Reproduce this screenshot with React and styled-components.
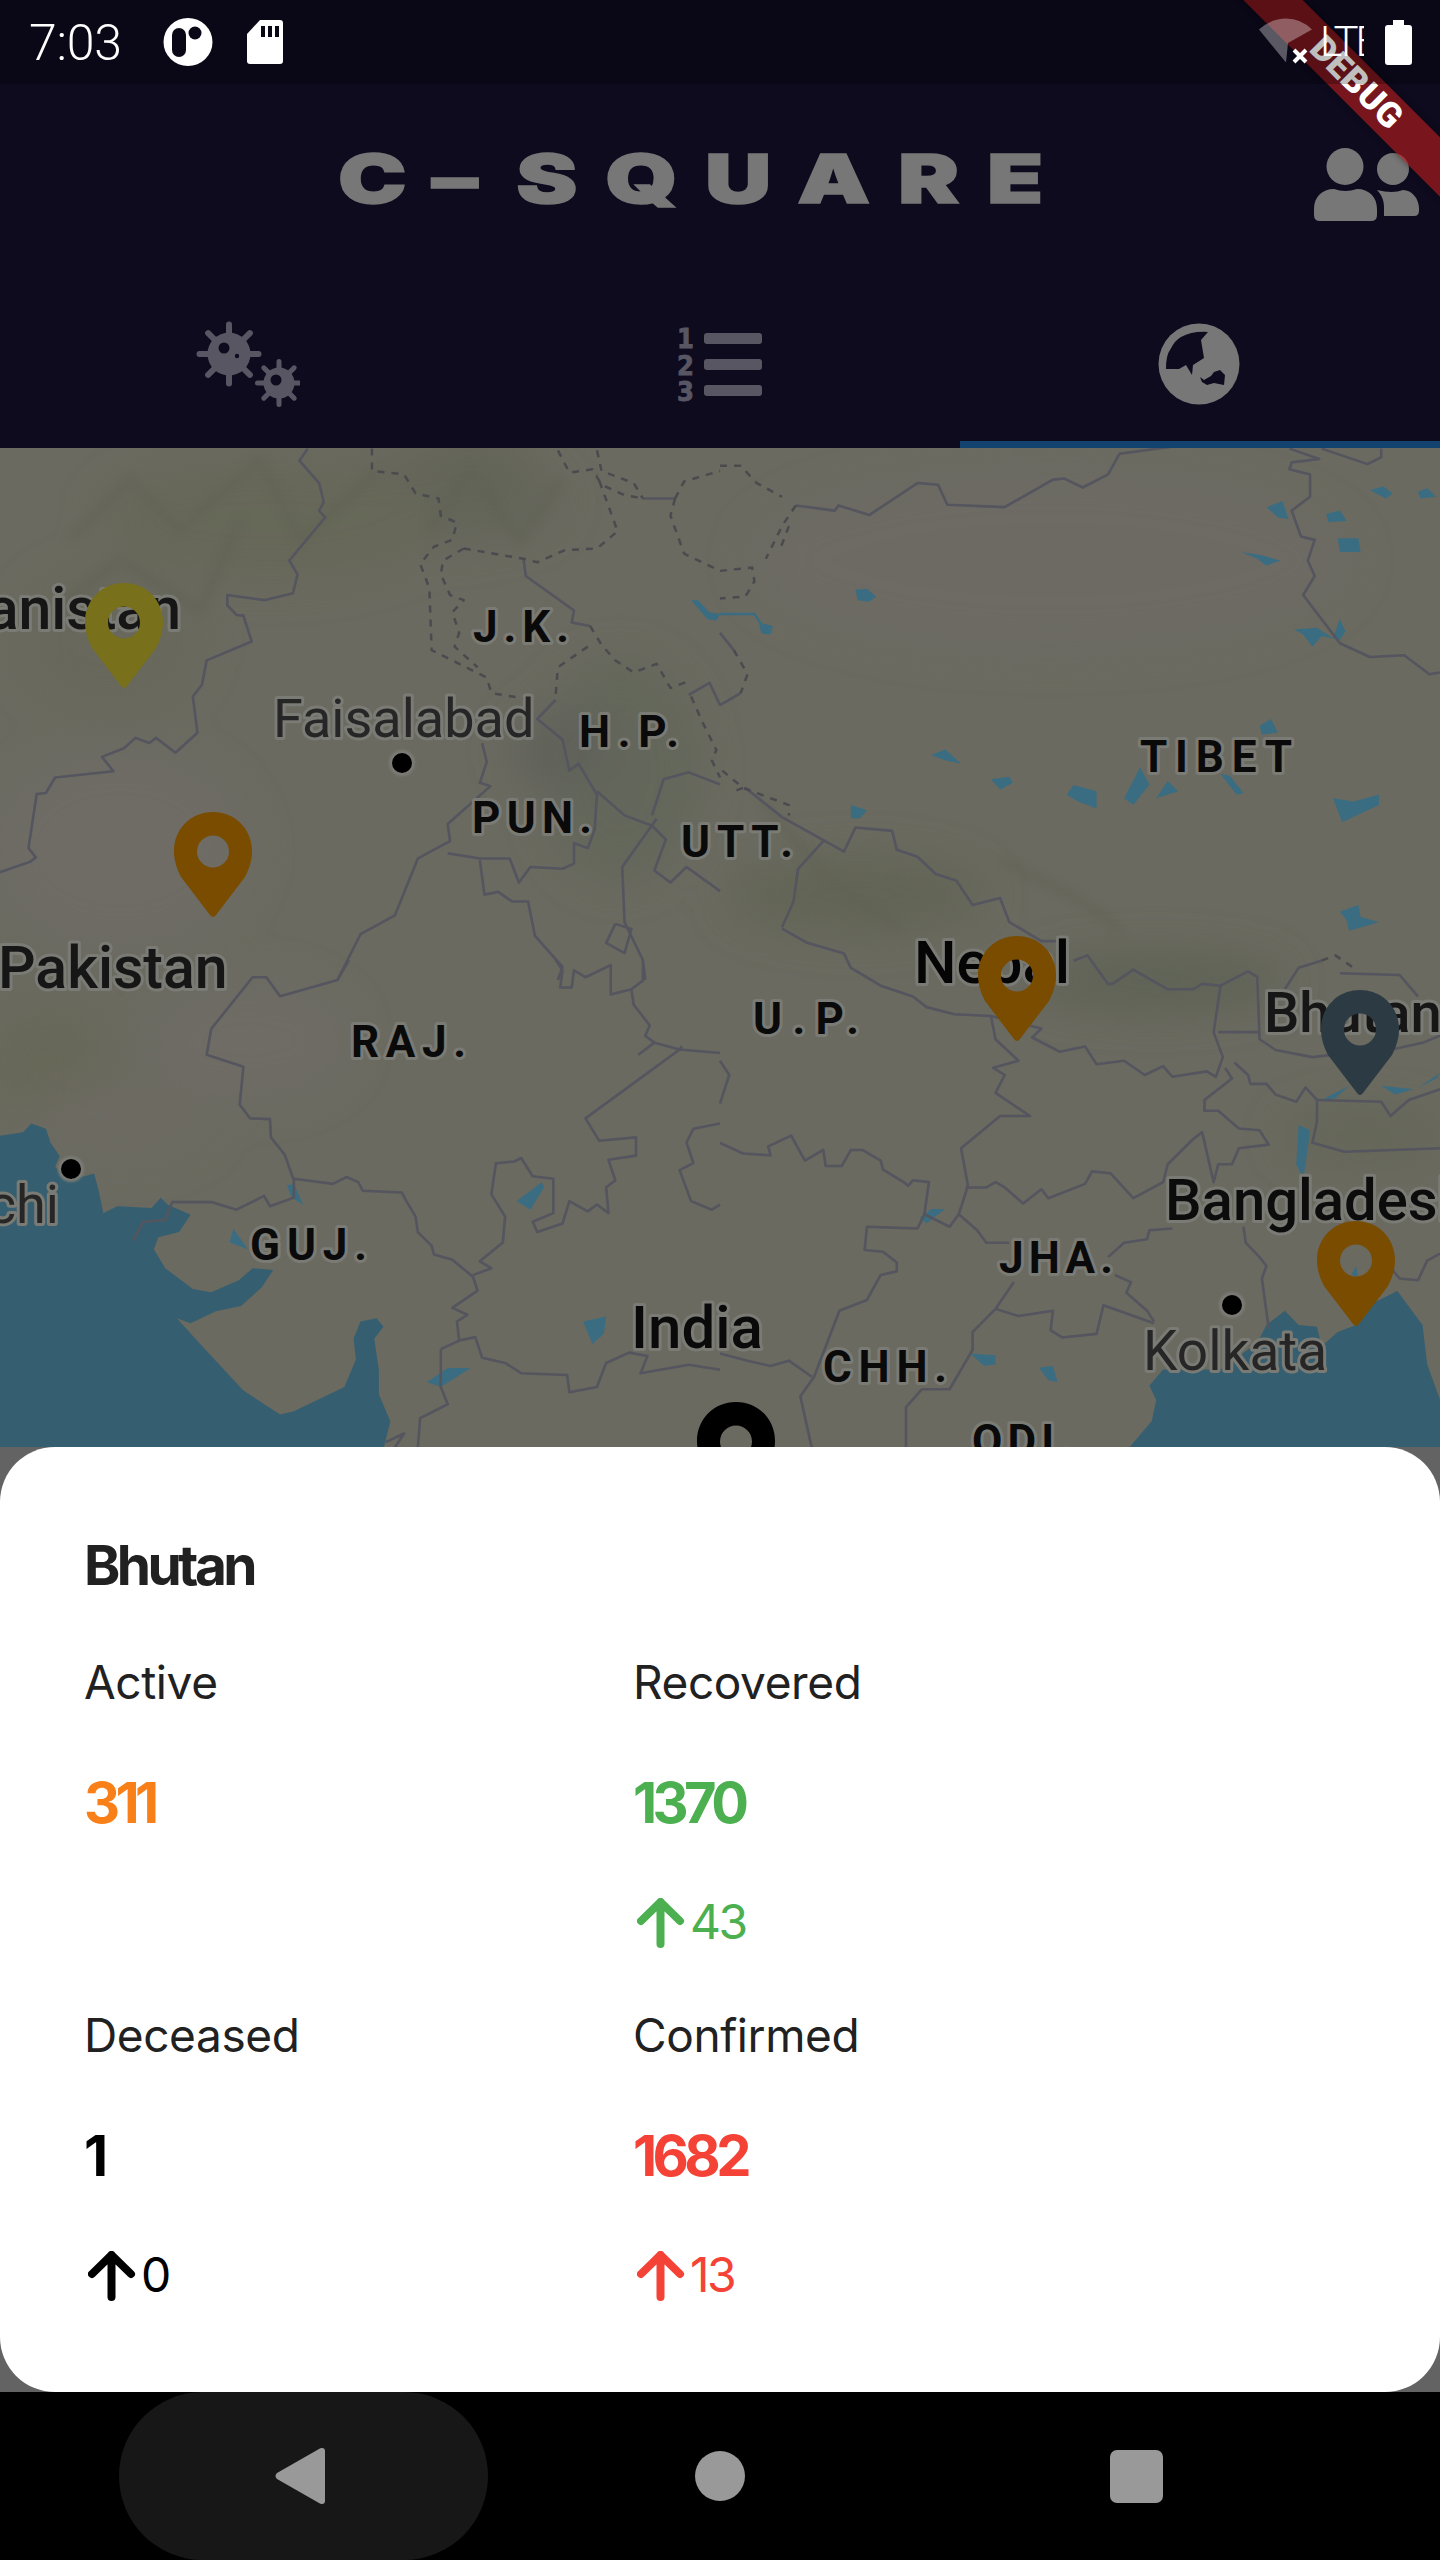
import React from "react";
import styled, { createGlobalStyle } from "styled-components";

const Global = createGlobalStyle`
  html, body { margin: 0; padding: 0; background: #000; }
  * { box-sizing: border-box; }
`;

const App_ = styled.div`
  position: relative;
  width: 1440px;
  height: 2560px;
  overflow: hidden;
  display: flex;
  flex-direction: column;
  background: #636363;
  font-family: Inter, "Liberation Sans", sans-serif;
`;
const Header = styled.header`
  display: flex;
  flex-direction: column;
  height: 448px;
  background: #0e0b1f;
`;
const StatusBar = styled.div`
  position: relative;
  z-index: 3;
  display: flex;
  align-items: center;
  height: 84px;
  padding: 0 28px 0 29px;
  background: rgba(0, 0, 0, 0.25);
  color: #fff;
  font-family: Roboto, sans-serif;
`;
const Clock = styled.span`
  font-size: 50px;
  font-weight: 300;
  line-height: 84px;
  margin: 2px 41px 0 0;
  letter-spacing: -0.2px;
`;
const StatusIcon = styled.svg`
  display: block;
  flex: none;
  margin-left: ${(p) => p.$ml || 0}px;
`;
const StatusRight = styled.div`
  margin-left: auto;
  display: flex;
  align-items: center;
`;
const Lte = styled.span`
  display: block;
  width: 44px;
  overflow: hidden;
  margin-left: 7px;
  margin-right: 21px;
  font-size: 42px;
  font-weight: 300;
  letter-spacing: -3px;
  line-height: 42px;
  white-space: nowrap;
`;
const Banner = styled.div`
  position: absolute;
  z-index: 2;
  left: 1108px;
  top: 64px;
  width: 500px;
  height: 42px;
  padding-right: 5px;
  transform: rotate(45deg);
  background: rgba(183, 28, 28, 0.63);
  box-shadow: 0 0 6px rgba(0, 0, 0, 0.4);
  color: #fff;
  font: 900 35px/42px Roboto, sans-serif;
  text-align: center;
  letter-spacing: 0.5px;
`;
const AppBar = styled.div`
  display: flex;
  align-items: center;
  height: 196px;
  padding: 0 21px 0 338px;
`;
const Title = styled.h1`
  margin: 0 0 8px;
  font: 900 68px/70px Inter, sans-serif;
  letter-spacing: 20.5px;
  color: #777;
  -webkit-text-stroke: 1.5px #777;
  white-space: nowrap;
  transform: scaleX(1.35);
  transform-origin: left center;
`;
const Dash = styled.span`
  display: inline-block;
  margin: 0 4px;
  transform: scaleX(1.45);
`;
const PeopleIcon = styled.svg`
  display: block;
  margin-left: auto;
  margin-top: 6px;
`;
const Tabs = styled.nav`
  display: grid;
  grid-template-columns: repeat(3, 1fr);
  height: 168px;
`;
const Tab = styled.div`
  display: flex;
  align-items: center;
  justify-content: center;
  border-bottom: 7px solid ${(p) => (p.$active ? "#12436f" : "transparent")};
  padding-top: 7px;
`;
const TabIcon = styled.svg`
  display: block;
`;
const MapView = styled.svg`
  display: block;
  flex: none;
  width: 1440px;
  height: 999px;
  polyline { vector-effect: non-scaling-stroke; }
`;
const Border = styled.polyline`
  fill: none;
  stroke: ${(p) => (p.$dash ? "#4b4b4f" : "#54555e")};
  stroke-width: ${(p) => (p.$dash ? 2.5 : 2.6)}px;
  stroke-linejoin: round;
  stroke-dasharray: ${(p) => (p.$dash ? "7 7" : "none")};
`;
const MapLabel = styled.text`
  font-family: Roboto, sans-serif;
  font-size: ${(p) => p.$size}px;
  font-weight: ${(p) => p.$weight};
  fill: ${(p) => p.$fill};
  stroke: #7b7b76;
  stroke-width: 6px;
  stroke-linejoin: round;
  paint-order: stroke;
`;
const Sheet = styled.section`
  background: #fff;
  border-radius: 55px;
  height: 945px;
  padding: 88px 0 0 84px;
  color: #222;
`;
const Country = styled.h2`
  margin: 0 0 57px;
  font: 700 55px/60px Inter, sans-serif;
  letter-spacing: -3.6px;
  color: #212121;
`;
const Stats = styled.div`
  display: grid;
  grid-template-columns: 549px 549px;
  row-gap: 52px;
`;
const Stat = styled.div`
  display: flex;
  flex-direction: column;
`;
const StatLabel = styled.div`
  font: 400 46px/60px Inter, sans-serif;
  letter-spacing: -0.4px;
  color: #212121;
  margin-bottom: 61px;
`;
const StatValue = styled.div`
  font: 700 56px/60px Inter, sans-serif;
  letter-spacing: -4.6px;
  color: ${(p) => p.$color};
  margin-bottom: 60px;
`;
const Delta = styled.div`
  display: flex;
  align-items: center;
  gap: 5px;
  height: 60px;
  font: 400 48px/60px Inter, sans-serif;
  letter-spacing: -2.5px;
  color: ${(p) => p.$color};
`;
const DeltaText = styled.span`
  margin-top: -3px;
`;
const Arrow = styled.svg`
  display: block;
  margin-left: 4px;
  flex: none;
`;
const NavBar = styled.footer`
  display: grid;
  grid-template-columns: repeat(3, 417px);
  justify-items: center;
  align-items: center;
  height: 168px;
  padding: 0 94.5px;
  background: #000;
`;
const BackPill = styled.div`
  display: flex;
  align-items: center;
  justify-content: center;
  width: 369px;
  height: 168px;
  padding-right: 6px;
  border-radius: 84px;
  background: #171717;
`;
const HomeDot = styled.div`
  width: 50px;
  height: 50px;
  border-radius: 50%;
  background: #999;
`;
const RecentSquare = styled.div`
  width: 53px;
  height: 53px;
  margin-right: 2px;
  border-radius: 7px;
  background: #999;
`;

const SEA = "#355f70";
const LAKE = "#3a6d82";

const Z3 = "translate(0 440) scale(.4592 .3444)";
const Z4 = "translate(720 440) scale(.4592 .3444)";
const Z5 = "translate(0 960) scale(.4592 .3444)";
const Z9 = "translate(720 900) scale(.4592 .3571)";

const data = [
  {
    t: Z3,
    solid: [
      "670,25 652,60 695,125 705,180 695,205 708,225 630,350 648,390 638,445 575,465 495,450 495,480 515,508 530,510 548,585 450,640 440,710 420,745 430,850 382,908 340,865 325,880 295,865 270,895 222,920 247,962 120,980 100,1025 80,1028 62,1185 78,1212 65,1225 0,1255",
      "1050,880 1060,935 1045,995 1068,1005 975,1115 980,1165 910,1215 860,1380 785,1435 735,1568",
      "975,1200 1045,1215 1110,1215 1130,1285 1155,1240 1225,1245 1250,1230 1250,1170 1280,1185 1295,1130 1300,1030 1260,940 1240,960 1225,870 1170,810 1210,755",
      "1045,1220 1055,1320 1085,1312 1115,1340 1150,1340 1165,1440 1225,1530 1215,1568",
      "1300,1020 1360,1090 1420,1120 1450,1160 1425,1250 1460,1285 1495,1240 1568,1310",
      "1430,1100 1355,1240 1360,1400 1400,1510 1405,1568",
      "1340,1405 1320,1460 1360,1490 1375,1420 1340,1405",
      "1420,1090 1445,985 1500,965 1568,1000",
      "1140,345 1145,395 1250,495 1245,530 1285,540",
      "1500,740 1545,705 1568,770",
      "1400,170 1470,170",
    ],
    dash: [
      "810,25 810,90 880,100 905,155 955,170 960,220 995,240 985,290 945,310 915,360 935,430 940,610 1000,650 1060,690 1070,735 1140,750",
      "1010,315 965,350 960,390 980,450 1010,465 985,500 1000,560 990,600 1040,660",
      "1010,315 1140,345 1170,355 1230,320 1300,315 1345,265 1300,100",
      "1215,30 1240,95 1290,85 1310,130 1360,160 1400,170",
      "1300,30 1310,90 1380,125 1400,170",
      "1470,170 1460,220 1490,330 1568,380",
      "1470,170 1490,120 1568,90",
      "1285,540 1310,595 1340,640 1380,675 1430,650 1460,720 1500,700",
      "1280,600 1215,660 1210,740",
      "1505,745 1530,820 1560,900 1550,930 1568,980",
    ],
    lakes: ["1505,465 1520,465 1545,500 1568,505 1560,525 1540,520"],
  },
  {
    t: Z4,
    solid: [
      "165,190 250,205 258,190 325,218 430,125 475,130 495,188 620,195 725,115 750,112 790,138 845,100 870,40 980,20",
      "1240,25 1305,55 1245,65 1240,85 1285,100 1285,165 1245,205 1265,280 1295,290 1280,350 1295,395 1270,450 1350,590 1415,630 1490,625 1545,680 1568,675",
      "1310,25 1410,70 1440,50 1440,25",
      "135,1095 270,1195 295,1125 375,1135 385,1190 430,1210 470,1260 515,1280 550,1350 610,1330 630,1400 700,1455 750,1455",
      "225,1165 170,1245 160,1340 135,1415",
      "135,1095 55,1010",
      "0,770 45,735",
      "0,560 30,610",
    ],
    dash: [
      "0,75 45,75 80,125 135,165",
      "165,190 135,250 100,345",
      "150,250 130,320",
      "0,380 70,370 75,410 55,455 0,460",
      "30,610 60,680 45,735",
      "5,960 50,1010 150,1060 150,1090",
      "50,1010 30,1020",
    ],
    lakes: [
      "295,435 320,432 340,455 325,470 300,465",
      "85,530 115,540 110,565 90,562",
      "1190,195 1225,178 1238,230 1215,225",
      "1415,145 1445,135 1465,155 1450,170",
      "1520,150 1540,140 1560,165 1525,170",
      "1320,215 1350,205 1365,235 1325,238",
      "1345,285 1390,285 1395,325 1350,325",
      "1135,325 1180,335 1220,350 1190,365 1170,345",
      "1250,550 1300,545 1335,575 1350,520 1362,555 1350,580 1310,570 1290,600 1270,565",
      "1175,830 1200,810 1215,850 1180,855",
      "460,915 490,898 525,940 490,930",
      "590,985 630,978 638,995 610,1015",
      "755,1030 770,1002 820,1020 820,1070 780,1050",
      "880,1040 915,950 935,1000 900,1060",
      "950,1040 975,990 998,1020",
      "1090,970 1110,975 1140,1025 1125,1030",
      "1335,1040 1380,1050 1435,1030 1435,1060 1355,1110",
      "285,1060 320,1075 305,1098 285,1098",
      "1350,1370 1390,1350 1395,1385 1435,1400 1370,1425 1365,1395",
    ],
    rivers: ["0,505 75,505 90,535"],
  },
  {
    t: Z5,
    sea: "0,510 50,500 68,475 100,490 110,530 130,570 120,600 150,640 205,620 215,670 225,735 255,715 330,720 350,690 365,710 415,740 390,790 345,805 335,840 360,895 420,955 460,965 520,930 550,895 595,900 570,950 525,1005 470,1020 415,1055 385,1040 450,1135 530,1250 610,1320 640,1310 750,1240 775,1160 770,1100 785,1050 820,1040 835,1065 815,1100 825,1190 825,1260 850,1340 835,1420 0,1420",
    solid: [
      "760,0 735,58 610,105 580,50 550,50 460,200 450,275 530,310 522,420 545,460 588,462 590,515 620,565 640,640 640,690 588,715 575,685 515,725 460,703 375,703 360,755 312,760 290,815",
      "640,635 725,650 755,630 780,645 790,670 875,675 885,700 905,745 910,790 940,830 945,855 985,870 1030,920 1040,960 985,1010 1018,1030 995,1050 1000,1105 1035,1095 1050,1155 1100,1170 1135,1200 1235,1205 1240,1255 1300,1240 1320,1170 1370,1140 1410,1150 1395,1200 1500,1175 1568,1190",
      "1485,250 1480,260 1275,460 1305,525 1385,515 1385,568 1325,580 1340,640 1320,660 1325,735 1300,710 1280,730 1240,700 1225,765 1170,790 1160,760 1205,735 1205,635 1160,628 1135,575 1120,585 1080,590 1070,680 1100,745 1095,820 1045,875 1070,895 1030,915",
      "1210,0 1225,30 1220,80 1245,80 1250,30 1275,50 1330,15 1330,100 1375,85 1380,130 1415,190 1405,220 1425,240 1390,275",
      "1425,240 1480,260 1568,270",
      "1400,0 1400,60 1375,85",
      "1568,475 1510,490 1495,530 1510,590 1480,610 1505,700 1550,725 1568,710",
      "960,1130 1000,1105",
      "960,1130 960,1240 975,1290 915,1330 910,1415",
      "860,1415 880,1375 840,1400",
    ],
    lakes: [
      "625,655 640,650 660,710 635,690",
      "500,820 508,780 540,840",
      "1125,700 1180,645 1185,660 1155,725",
      "1270,1050 1320,1035 1315,1085 1290,1115",
      "930,1225 975,1185 1025,1185 960,1240",
    ],
  },
  {
    t: Z9,
    sea: "935,1360 965,1315 1090,1315 1170,1240 1190,1190 1230,1150 1260,1190 1300,1195 1310,1250 1345,1210 1385,1190 1420,1130 1475,1095 1530,1190 1540,1300 1568,1400 1568,1535 890,1535 940,1460 950,1400",
    solid: [
      "135,80 190,120 270,150 285,190 350,240 420,270 450,300 510,320 590,325 600,390 650,450 595,470 620,490 600,540 675,605 610,605 525,695 540,800 520,880 560,925 580,960 630,960",
      "590,325 700,360 680,385 740,425 795,410 820,460 880,450 925,490 965,465 985,495 1060,480 1080,495 1095,440 1075,370 1090,240 1050,235 1030,250 975,250 900,195 855,235 845,235 800,155 770,170",
      "1090,240 1150,200 1170,215 1175,390 1210,420 1290,440 1360,430 1440,425 1530,400 1568,380",
      "1230,250 1260,190 1310,170",
      "1350,205 1480,210 1520,270",
      "1085,370 1175,370",
      "1100,470 1115,500 1055,560 1055,590 1085,590 1130,640 1175,645 1195,685 1130,695 1115,740 1085,740 1075,790 1050,650 1030,670 975,740 965,790 900,835 850,765 810,760 795,795 715,835 700,810 660,850 620,805 600,790 580,805 535,805",
      "1120,455 1150,490 1155,515 1190,515 1210,545 1255,565 1275,525 1300,560 1300,620 1290,680 1360,705 1568,695",
      "1300,560 1440,565 1460,605 1500,560 1568,530",
      "0,680 50,710 110,715 105,690 155,660 185,730 225,700 230,745 265,745 285,700 310,700 350,730 355,755 400,790 410,800 420,785 455,790 445,880 430,920 320,915 315,980 355,985 385,1015 385,1040 350,1050 320,1120 260,1150 205,1335 175,1390 200,1535",
      "0,1270 60,1290 110,1305 150,1290 200,1335",
      "445,880 500,915 520,880",
      "860,1050 895,1070 885,1100 930,1150 945,1180",
      "600,1145 650,1165 725,1150 720,1205 745,1225 820,1215 835,1135 945,1185",
      "600,1145 640,1070",
      "600,1145 550,1210 550,1260 500,1370 440,1370 405,1420 405,1535",
      "845,1000 880,960 930,950 935,925 985,920",
      "1140,915 1145,960 1175,1000 1190,1025 1180,1060 1195,1200",
      "1440,1000 1480,1060 1520,1065 1540,1010 1568,990",
      "0,450 20,490 0,570",
    ],
    dash: ["1310,170 1340,155 1380,190"],
    lakes: [
      "1310,560 1370,520 1340,555",
      "1440,520 1510,530 1470,545",
      "1520,525 1568,485 1560,500",
      "1260,630 1285,645 1275,740 1270,780 1255,740",
      "435,890 460,865 490,865 450,905",
      "545,1270 600,1275 600,1300 575,1305",
      "695,1310 725,1305 735,1350 715,1345",
      "1375,1050 1385,1025 1390,1055",
    ],
  },
];

const blotches = [
  [430, 500, 130, 45, "#63655a"],
  [270, 520, 170, 60, "#666759"],
  [110, 640, 90, 70, "#67685b"],
  [620, 770, 80, 110, "#64665a"],
  [560, 750, 50, 40, "#60625a"],
  [470, 470, 60, 40, "#636558"],
  [857, 895, 130, 38, "#626555"],
  [1156, 982, 130, 28, "#5f6255"],
  [1363, 1135, 80, 25, "#646656"],
  [46, 1063, 60, 60, "#676858"],
  [120, 850, 130, 100, "#6e6c65"],
  [250, 1040, 100, 60, "#6e6c65"],
  [1050, 560, 300, 90, "#6d6b64"],
  [120, 1120, 90, 40, "#6d6b62"],
];

const ridges = [
  "70,540 130,480 180,530 260,460 300,540 380,470",
  "40,620 120,560 200,610 240,520",
  "430,530 470,470 520,540 560,480",
  "760,800 830,880 900,930",
  "1000,860 1080,900 1120,930",
];

const labels = [
  ["Afghanistan", 181, 629, 59, 500, "#161616", "end"],
  ["Faisalabad", 273, 737, 54, 400, "#262626"],
  ["Pakistan", -2, 988, 59, 500, "#161616"],
  ["India", 631, 1348, 60, 500, "#0a0a0a"],
  ["Nepal", 914, 983, 60, 500, "#050505"],
  ["Bhutan", 1264, 1032, 56, 500, "#161616"],
  ["Bangladesh", 1165, 1220, 58, 500, "#0c0c0c"],
  ["Kolkata", 1143, 1370, 55, 400, "#262626"],
  ["Karachi", 59, 1223, 54, 400, "#262626", "end"],
  ["J.K.", 473, 642, 44, 700, "#0a0a0a", "start", 96],
  ["H.P.", 579, 747, 44, 700, "#0a0a0a", "start", 100],
  ["PUN.", 472, 833, 44, 700, "#0a0a0a", "start", 120],
  ["UTT.", 681, 857, 44, 700, "#0a0a0a", "start", 112],
  ["TIBET", 1140, 772, 44, 700, "#0a0a0a", "start", 152],
  ["RAJ.", 351, 1057, 44, 700, "#0a0a0a", "start", 115],
  ["U.P.", 753, 1034, 44, 700, "#0a0a0a", "start", 106],
  ["GUJ.", 250, 1260, 44, 700, "#0a0a0a", "start", 117],
  ["JHA.", 999, 1273, 44, 700, "#0a0a0a", "start", 114],
  ["CHH.", 823, 1382, 44, 700, "#0a0a0a", "start", 124],
  ["ODI.", 972, 1456, 44, 700, "#0a0a0a", "start", 100],
];

const cities = [
  [402, 763],
  [71, 1169],
  [1232, 1305],
];

const PIN =
  "M39 0C61 0 78 17 78 39C78 49 75 57 71 65L42 103Q39 107 36 103L7 65C3 57 0 49 0 39C0 17 17 0 39 0ZM39 23.5A16 16 0 1 0 39 55.5A16 16 0 1 0 39 23.5Z";

const pins = [
  [85, 583, "#78701a"],
  [174, 812, "#7a4c00"],
  [978, 936, "#7a4c00"],
  [1321, 990, "#2c3a43"],
  [1317, 1221, "#7a4c00"],
  [697, 1402, "#000"],
];

const WorldMap = () => (
  <MapView viewBox="0 448 1440 999">
    <defs>
      <filter id="soft" x="-30%" y="-30%" width="160%" height="160%">
        <feGaussianBlur stdDeviation="22" />
      </filter>
      <filter id="ridge" x="-10%" y="-10%" width="120%" height="120%">
        <feGaussianBlur stdDeviation="5" />
      </filter>
      <filter id="dotHalo" x="-50%" y="-50%" width="200%" height="200%">
        <feGaussianBlur stdDeviation="1" />
      </filter>
    </defs>
    <rect x="0" y="448" width="1440" height="999" fill="#6a6a60" />
    <g filter="url(#soft)">
      {blotches.map(([cx, cy, rx, ry, fill], i) => (
        <ellipse key={i} cx={cx} cy={cy} rx={rx} ry={ry} fill={fill} />
      ))}
    </g>
    <g filter="url(#ridge)" fill="none" stroke="#5e6052" strokeWidth="8" opacity=".45">
      {ridges.map((r, i) => (
        <polyline key={i} points={r} />
      ))}
    </g>
    {data.map((d, i) => (
      <g key={i} transform={d.t}>
        {d.sea && <polygon points={d.sea} fill={SEA} />}
        {(d.lakes || []).map((p, j) => (
          <polygon key={j} points={p} fill={LAKE} />
        ))}
        {(d.rivers || []).map((p, j) => (
          <polyline key={j} points={p} fill="none" stroke={LAKE} strokeWidth="2.5" />
        ))}
        {(d.solid || []).map((p, j) => (
          <Border key={j} points={p} />
        ))}
        {(d.dash || []).map((p, j) => (
          <Border key={j} points={p} $dash />
        ))}
      </g>
    ))}
    {labels.map(([t, x, y, size, weight, fill, anchor, len], i) => (
      <MapLabel
        key={i}
        x={x}
        y={y}
        $size={size}
        $weight={weight}
        $fill={fill}
        textAnchor={anchor || "start"}
        {...(len ? { textLength: len, lengthAdjust: "spacing" } : {})}
      >
        {t}
      </MapLabel>
    ))}
    {cities.map(([x, y], i) => (
      <g key={i}>
        <circle cx={x} cy={y} r="13" fill="#7b7b76" filter="url(#dotHalo)" />
        <circle cx={x} cy={y} r="10" fill="#000" />
      </g>
    ))}
    {pins.map(([x, y, c], i) => (
      <path key={i} transform={`translate(${x} ${y})`} d={PIN} fill={c} fillRule="evenodd" />
    ))}
  </MapView>
);

const Spike = ({ cx, cy, r, w, n = 8 }) => (
  <>
    {Array.from({ length: n }).map((_, i) => (
      <line
        key={i}
        x1={cx}
        y1={cy}
        x2={cx + r * Math.sin((i * 2 * Math.PI) / n)}
        y2={cy - r * Math.cos((i * 2 * Math.PI) / n)}
        stroke="#595664"
        strokeWidth={w}
        strokeLinecap="round"
      />
    ))}
  </>
);

const VirusIcon = () => (
  <TabIcon width="120" height="100" viewBox="180 314 120 100">
    <Spike cx={229} cy={354} r={29.5} w={6} />
    <circle cx={229} cy={354} r={21.5} fill="#595664" />
    <circle cx={224} cy={348} r={5.5} fill="#0e0b1f" />
    <circle cx={237} cy={356} r={2.2} fill="#0e0b1f" />
    <Spike cx={279} cy={383} r={21.5} w={5} />
    <circle cx={279} cy={383} r={15.5} fill="#595664" />
    <circle cx={276} cy={380} r={5.5} fill="#0e0b1f" />
  </TabIcon>
);

const Rank = styled.text`
  font-family: "DejaVu Sans Condensed", "DejaVu Sans", sans-serif;
  font-weight: 700;
  font-size: 27px;
  fill: #595664;
  text-anchor: middle;
  stroke: #595664;
  stroke-width: 0.8px;
`;

const RankIcon = () => (
  <TabIcon width="120" height="100" viewBox="660 314 120 100">
    <Rank x="685.5" y="348">1</Rank>
    <Rank x="685.5" y="375">2</Rank>
    <Rank x="685.5" y="401">3</Rank>
    <rect x="704" y="333" width="58" height="11" rx="3" fill="#595664" />
    <rect x="704" y="359" width="58" height="11" rx="3" fill="#595664" />
    <rect x="704" y="385" width="58" height="11" rx="3" fill="#595664" />
  </TabIcon>
);

const GlobeIcon = () => (
  <TabIcon width="120" height="100" viewBox="1140 314 120 100">
    <circle cx="1199" cy="364" r="40.5" fill="#777" />
    <path
      d="M1166 369Q1166 355 1170 350Q1175 340 1181 337Q1192 331 1208 332L1201 340L1204 358L1193 365L1192 375L1186 365L1179 369Z"
      fill="#0e0b1f"
    />
    <path
      d="M1200 377L1204 380L1211 376L1214 372L1220 370L1225 375L1224 385L1214 383L1207 385L1202 382Z"
      fill="#0e0b1f"
    />
  </TabIcon>
);

const Up = ({ color }) => (
  <Arrow width="48" height="50" viewBox="0 0 48 50">
    <path
      d="M23.5 46V4M4 23L23.5 4L43 23"
      fill="none"
      stroke={color}
      strokeWidth="8"
      strokeLinecap="round"
      strokeLinejoin="miter"
    />
  </Arrow>
);

const stats = [
  { label: "Active", value: "311", color: "#f98019" },
  { label: "Recovered", value: "1370", color: "#4caf50", delta: "43" },
  { label: "Deceased", value: "1", color: "#000", delta: "0" },
  { label: "Confirmed", value: "1682", color: "#f44336", delta: "13" },
];

export default function App() {
  return (
    <App_>
      <Global />
      <Header>
        <StatusBar>
          <Clock>7:03</Clock>
          <StatusIcon width="50" height="48" viewBox="0 0 50 48">
            <ellipse cx="25" cy="24" rx="24.5" ry="24" fill="#fff" />
            <rect x="9" y="10" width="14" height="29" rx="7" fill="#0a0817" />
            <circle cx="32" cy="15" r="6.5" fill="#0a0817" />
          </StatusIcon>
          <StatusIcon width="36" height="44" viewBox="0 0 36 44" $ml={34}>
            <path
              d="M13 0H33Q36 0 36 3V41Q36 44 33 44H3Q0 44 0 41V14Z"
              fill="#fff"
            />
            <rect x="14" y="6" width="4" height="11" fill="#0a0817" />
            <rect x="21" y="6" width="4" height="11" fill="#0a0817" />
            <rect x="28" y="6" width="4" height="11" fill="#0a0817" />
          </StatusIcon>
          <StatusRight>
            <StatusIcon width="54" height="48" viewBox="0 0 54 48">
              <path
                d="M27 44.5L0 11.5Q12 0.5 27 0.5Q42 0.5 53 11.5L29 25Z"
                fill="#fff"
                fillOpacity=".33"
              />
              <path d="M35 32L47 44M47 32L35 44" stroke="#fff" strokeWidth="4" />
            </StatusIcon>
            <Lte>LTE</Lte>
            <StatusIcon width="27" height="45" viewBox="0 0 27 45">
              <path
                d="M8 0H19V5H24Q27 5 27 8V42Q27 45 24 45H3Q0 45 0 42V8Q0 5 3 5H8Z"
                fill="#fff"
              />
            </StatusIcon>
          </StatusRight>
        </StatusBar>
        <AppBar>
          <Title>
            C<Dash>-</Dash>SQUARE
          </Title>
          <PeopleIcon width="105" height="74" viewBox="1314 149 105 74">
            <circle cx="1345" cy="167.5" r="18.5" fill="#777" />
            <circle cx="1393" cy="170" r="16" fill="#777" />
            <path
              d="M1314 210C1314 198 1322 190 1334 190Q1345 194 1357 190C1369 190 1377 198 1377 210V216Q1377 222 1371 222H1320Q1314 222 1314 216Z"
              fill="#777"
            />
            <path
              d="M1377 191Q1393 195 1403 191C1412 191 1419 200 1419 209V212Q1419 217 1414 217H1384V208C1384 202 1382 196 1377 191Z"
              fill="#777"
            />
          </PeopleIcon>
        </AppBar>
        <Tabs>
          <Tab>
            <VirusIcon />
          </Tab>
          <Tab>
            <RankIcon />
          </Tab>
          <Tab $active>
            <GlobeIcon />
          </Tab>
        </Tabs>
      </Header>
      <Banner>DEBUG</Banner>
      <WorldMap />
      <Sheet>
        <Country>Bhutan</Country>
        <Stats>
          {stats.map((s) => (
            <Stat key={s.label}>
              <StatLabel>{s.label}</StatLabel>
              <StatValue $color={s.color}>{s.value}</StatValue>
              <Delta $color={s.color}>
                {s.delta !== undefined && (
                  <>
                    <Up color={s.color} />
                    <DeltaText>{s.delta}</DeltaText>
                  </>
                )}
              </Delta>
            </Stat>
          ))}
        </Stats>
      </Sheet>
      <NavBar>
        <BackPill>
          <svg width="50" height="56" viewBox="0 0 50 56">
            <path
              d="M47 0Q50 0 50 3V53Q50 56 47 56Q45 56 44 55L2 31Q-1 28 2 25L44 1Q45 0 47 0Z"
              fill="#999"
            />
          </svg>
        </BackPill>
        <HomeDot />
        <RecentSquare />
      </NavBar>
    </App_>
  );
}
